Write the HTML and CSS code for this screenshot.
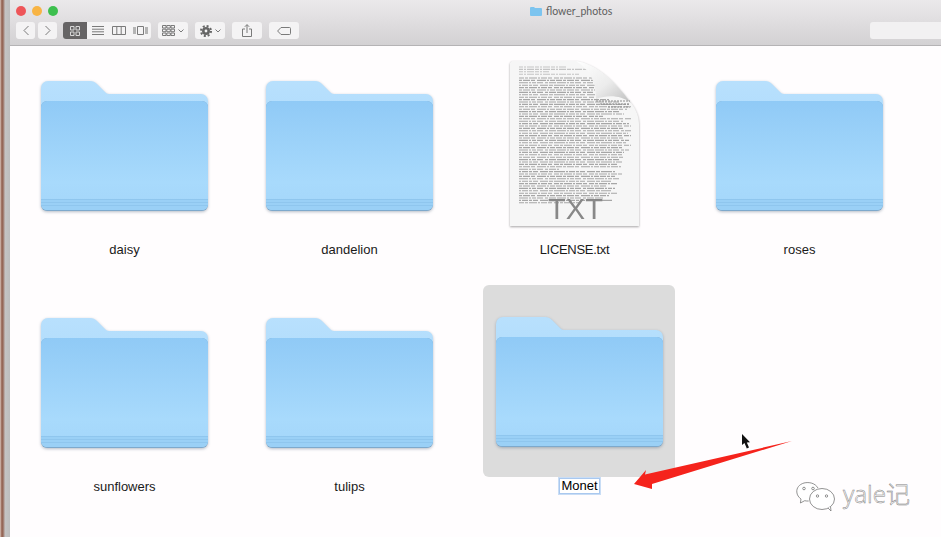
FILE: index.html
```html
<!DOCTYPE html>
<html lang="en">
<head>
  <meta charset="UTF-8" />
  <meta name="viewport" content="width=device-width, initial-scale=1.0"/>
  <title>flower_photos</title>
  <link rel="stylesheet" href="styles.css">
</head>
<body>
  <!-- shared folder picture -->
  <svg class="defs" width="0" height="0">
    <defs>
      <linearGradient id="folder-front" x1="0" y1="0" x2="0" y2="1">
        <stop offset="0" stop-color="#90caf6"/>
        <stop offset="0.75" stop-color="#a8dafc"/>
        <stop offset="1" stop-color="#a4d6fa"/>
      </linearGradient>
      <linearGradient id="folder-back" x1="0" y1="0" x2="0" y2="1">
        <stop offset="0" stop-color="#b8e0fd"/>
        <stop offset="1" stop-color="#aad9fb"/>
      </linearGradient>
      <linearGradient id="flap" x1="0" y1="0" x2="1" y2="1">
        <stop offset="0" stop-color="#ffffff"/>
        <stop offset="0.55" stop-color="#ececec"/>
        <stop offset="1" stop-color="#bdbdbd"/>
      </linearGradient>
      <symbol id="folder" viewBox="0 0 167 132">
        <path d="M0 8a7 7 0 0 1 7-7h42c3 0 5 1 7 3l8 8c2 2 3 2 6 2h90a7 7 0 0 1 7 7v60H0z" fill="url(#folder-back)"/>
        <rect x="0" y="21" width="167" height="110" rx="6" fill="#7ea9cc"/>
        <rect x="0" y="21" width="167" height="109" rx="6" fill="url(#folder-front)"/>
        <path d="M0 119h167v5a6 6 0 0 1-6 6H6a6 6 0 0 1-6-6z" fill="#9ad0f6"/>
        <path d="M0 119.500h167M0 122.500h167M0 125.500h167" stroke="#8fc6ee" stroke-width="1"/>
      </symbol>
    </defs>
  </svg>

  <div class="screen">
    <div class="edge"></div>
    <div class="window">
      <header class="chrome">
        <div class="titlebar">
          <span class="light red"></span>
          <span class="light yellow"></span>
          <span class="light green"></span>
          <div class="title">
            <svg class="title-icon" width="12" height="9" viewBox="0 0 12 9"><path d="M0 1a1 1 0 0 1 1-1h3l1 1h6a1 1 0 0 1 1 1v6a1 1 0 0 1-1 1H1a1 1 0 0 1-1-1z" fill="#7cc4ef"/></svg>
            <span>flower_photos</span>
          </div>
        </div>
        <div class="toolbar">
          <div class="group">
            <button class="btn nav"><svg width="8" height="11" viewBox="0 0 8 11"><path d="M6.500 1L2 5.500 6.500 10"/></svg></button>
            <button class="btn nav"><svg width="8" height="11" viewBox="0 0 8 11"><path d="M1.500 1L6 5.500 1.500 10"/></svg></button>
          </div>
          <div class="views">
            <button class="view active"><svg width="10" height="10" viewBox="0 0 10 10"><path d="M.5.500h3.500v3.500h-3.500zM6 .500h3.500v3.500H6zM.5 6h3.500v3.500h-3.500zM6 6h3.500v3.500H6z"/></svg></button>
            <button class="view"><svg width="12" height="9" viewBox="0 0 12 9"><path d="M0 .500h12M0 3.200h12M0 5.800h12M0 8.500h12"/></svg></button>
            <button class="view"><svg width="14" height="9" viewBox="0 0 14 9"><path d="M.5.500h13v8H.5zM4.800.500v8M9.200.500v8"/></svg></button>
            <button class="view cover"><svg width="15" height="9" viewBox="0 0 15 9"><path class="solid" d="M0 1h3v7H0zM12 1h3v7h-3z"/><path d="M4.500.500h6v8h-6z"/></svg></button>
          </div>
          <button class="btn wide"><svg width="13" height="11" viewBox="0 0 13 11"><path d="M.5.500h3.500v2.500H.5zM4.800.500h3.500v2.500H4.800zM9 .500h3.500v2.500H9zM.5 4.200h3.500v2.500H.5zM4.800 4.200h3.500v2.500H4.800zM9 4.200h3.500v2.500H9zM.5 8h3.500v2.500H.5zM4.800 8h3.500v2.500H4.800zM9 8h3.500v2.500H9z"/></svg><svg class="chev" width="6" height="4" viewBox="0 0 6 4"><path d="M.5.500L3 3 5.500.500"/></svg></button>
          <button class="btn wide"><svg width="12" height="12" viewBox="0 0 12 12"><circle class="gear-teeth" cx="6" cy="6" r="5"/><circle class="gear-body" cx="6" cy="6" r="2.700"/></svg><svg class="chev" width="6" height="4" viewBox="0 0 6 4"><path d="M.5.500L3 3 5.500.500"/></svg></button>
          <button class="btn wide"><svg width="10" height="13" viewBox="0 0 10 13"><path d="M3 5H.5v7.500h9V5H7M5 9V.8M2.800 2.800L5 .6l2.200 2.200"/></svg></button>
          <button class="btn wide"><svg width="14" height="8" viewBox="0 0 14 8"><path d="M4 .5h8.500a1 1 0 0 1 1 1v5a1 1 0 0 1-1 1H4L.6 4z"/></svg></button>
          <div class="search"></div>
        </div>
      </header>

      <main class="files">
        <div class="item">
          <div class="icon-box"><svg class="folder"><use href="#folder"/></svg></div>
          <span class="name">daisy</span>
        </div>
        <div class="item">
          <div class="icon-box"><svg class="folder"><use href="#folder"/></svg></div>
          <span class="name">dandelion</span>
        </div>
        <div class="item">
          <div class="icon-box">
            <svg class="doc" width="129" height="167" viewBox="0 0 129 167">
              <path class="paper" d="M2 0H66C84 3 100 15 118 38C125 46 129 54 129 63V165H0V2z"/>
              <path class="lines faint" d="M9 6h48M9 8.400h72M9 10.800h30M9 13.200h60"/>
              <path class="lines line-a" d="M9 17h74M9 26.600h75M9 36.200h76M9 45.800h112M9 55.400h84M9 65h112M9 74.600h112M9 84.200h112M9 93.800h103M9 103.400h98M9 113h104M9 122.600h99M9 132.200h99M9 141.800h62"/>
              <path class="lines line-b" d="M9 19.400h76M9 29h76M9 38.600h90M9 48.200h108M9 57.800h112M9 67.400h106M9 77h104M9 86.600h103M9 96.200h106M9 105.800h102M9 115.400h96M9 125h88M9 134.600h90"/>
              <path class="lines line-c" d="M9 21.800h74M9 31.400h74M9 41h100M9 50.600h100M9 60.200h104M9 69.800h112M9 79.400h110M9 89h110M9 98.600h100M9 108.200h40M9 117.800h100M9 127.400h96M9 137h84"/>
              <path class="lines line-d" d="M9 24.200h77M9 33.800h77M9 43.400h110M9 53h105M9 62.600h110M9 72.200h109M9 81.800h108M9 91.400h105M9 101h104M9 110.600h96M9 120.200h92M9 129.800h92M9 139.400h94"/>
              <path class="flap" d="M66 0C84 3 102 16 121 42C110 34 98 34 86 38C86 26 84 12 66 0z"/>
              <path class="fold-shadow" d="M86 40h34M90 43h30M98 46h22"/>
              <text class="doc-type" x="65.500" y="158" text-anchor="middle">TXT</text>
            </svg>
          </div>
          <span class="name doc-name">LICENSE.txt</span>
        </div>
        <div class="item">
          <div class="icon-box"><svg class="folder"><use href="#folder"/></svg></div>
          <span class="name">roses</span>
        </div>
        <div class="item">
          <div class="icon-box"><svg class="folder"><use href="#folder"/></svg></div>
          <span class="name">sunflowers</span>
        </div>
        <div class="item">
          <div class="icon-box"><svg class="folder"><use href="#folder"/></svg></div>
          <span class="name">tulips</span>
        </div>
        <div class="item moved">
          <div class="icon-box selected"><svg class="folder"><use href="#folder"/></svg></div>
          <span class="name editing">Monet</span>
        </div>
      </main>
    </div>

    <!-- annotations on top of the video frame -->
    <svg class="arrow" width="170" height="60" viewBox="0 0 170 60">
      <path d="M4 44L16 30 15 34.500 162 1 22 44 22 49z"/>
    </svg>
    <svg class="cursor" width="11" height="16" viewBox="0 0 11 16">
      <path d="M1 0L1 11 3.500 9 5.800 14.500 8 13.500 5.800 8.500 9 8.300z"/>
    </svg>
    <div class="watermark">
      <svg width="40" height="32" viewBox="0 0 40 32">
        <path d="M22 7C19 2 13 0.800 8 2 3 3.500 .5 7 .8 11c.2 3 2 5.500 4.200 7l-.6 4 4.300-2.300c1.500.3 2.500.4 4 .3"/>
        <ellipse cx="26" cy="18" rx="12.500" ry="10.500"/>
        <path d="M32 27l3 3-.5-4.500"/>
        <circle class="eye" cx="8" cy="7.500" r="1.300"/>
        <circle class="eye" cx="17" cy="7.500" r="1.300"/>
        <circle class="eye" cx="21.500" cy="15" r="1.200"/>
        <circle class="eye" cx="30.500" cy="15" r="1.200"/>
      </svg>
      <span class="watermark-text">yale记</span>
    </div>
  </div>
</body>
</html>
```

FILE: styles.css
```css
html, body {
  margin: 0;
  padding: 0;
  height: 537px;
  overflow: hidden;
}
body {
  font-family: 'Liberation Sans', 'Noto Sans CJK SC', sans-serif;
  background-color: #fffdfe;
}
.defs {
  display: block;
}
.screen {
  display: flex;
  height: 537px;
  position: relative;
  overflow: hidden;
}
.edge {
  flex: 0 0 10px;
  background: linear-gradient(to right, #d9c4bb 0, #8d5a48 2px, #a98d84 4px, #c4c4c4 5px, #bcbcbc 10px);
}
.window {
  flex: 1;
  display: flex;
  flex-direction: column;
  min-width: 0;
}

/* title bar and toolbar */
.chrome {
  box-sizing: border-box;
  height: 46px;
  padding: 1px 0 0 6px;
  border-bottom: 1px solid #b5b3b5;
  background: linear-gradient(#ebe9eb, #d3d1d3);
}
.titlebar {
  display: flex;
  align-items: center;
  gap: 6px;
  height: 20px;
}
.light {
  width: 10px;
  height: 10px;
  border-radius: 50%;
}
.red { background-color: #ee5559; }
.yellow { background-color: #f8b444; }
.green { background-color: #3dbf4e; }
.title {
  display: flex;
  align-items: center;
  gap: 4px;
  margin-left: 466px;
  font-family: 'Lato', 'Liberation Sans', sans-serif;
  font-size: 10.500px;
  color: #5e5e5e;
}
.toolbar {
  display: flex;
  align-items: center;
  gap: 7px;
  height: 17px;
  margin-top: 1px;
}
.toolbar button {
  border: 0;
  padding: 0;
  display: flex;
  align-items: center;
  justify-content: center;
}
.toolbar svg path {
  fill: none;
  stroke: #7a7a7a;
  stroke-width: 1;
}
.toolbar svg path.solid {
  fill: #b4b4b4;
  stroke: none;
}
.group {
  display: flex;
  gap: 3px;
}
.btn {
  height: 17px;
  border-radius: 3px;
  background-color: #f4f3f4;
}
.nav {
  width: 19px;
}
.wide {
  width: 30px;
  gap: 3px;
}
.views {
  display: flex;
  height: 17px;
  margin-left: -1px;
  border-radius: 3px;
  overflow: hidden;
  background-color: #f4f3f4;
}
.view {
  width: 21px;
  height: 17px;
  background-color: transparent;
}
.view.cover {
  width: 22px;
}
.view.active {
  width: 24px;
  background-color: #666465;
}
.toolbar .view.active path {
  stroke: #d8d8d8;
}
.gear-teeth {
  fill: none;
  stroke: #666;
  stroke-width: 2;
  stroke-dasharray: 2 1.930;
}
.gear-body {
  fill: #f4f3f4;
  stroke: #666;
  stroke-width: 2.600;
}
.search {
  width: 71px;
  height: 17px;
  margin-left: auto;
  border-radius: 3px 0 0 3px;
  background-color: #f2f1f2;
}

/* icon grid */
.files {
  flex: 1;
  display: grid;
  grid-template-columns: repeat(4, 225px);
  grid-auto-rows: 206px;
  row-gap: 31px;
  align-content: start;
  padding: 6px 0 0 2px;
}
.item {
  display: flex;
  flex-direction: column;
  align-items: center;
}
.item.moved {
  margin-left: 8px;
}
.icon-box {
  width: 192px;
  height: 188px;
  flex: none;
  display: flex;
  align-items: center;
  justify-content: center;
}
.icon-box.selected {
  height: 192px;
  margin-top: -4px;
  padding: 2px 0 0 2px;
  box-sizing: border-box;
  border-radius: 6px;
  background-color: #dcdcdc;
}
.folder {
  width: 167px;
  height: 132px;
  filter: drop-shadow(0 1px 1.500px rgba(90, 110, 130, 0.45));
}
.doc {
  display: block;
  margin-top: -4px;
  filter: drop-shadow(0 1px 1px rgba(0, 0, 0, 0.35));
}
.paper {
  fill: #f6f6f6;
}
.lines {
  fill: none;
  stroke: #a6a6a6;
  stroke-width: 1.100;
}
.line-a { stroke-dasharray: 5 1 3 1 8 1 2 1 6 1 4 2; }
.line-b { stroke-dasharray: 3 1 7 1 4 2 9 1 2 1 5 1 6 1; }
.line-c { stroke-dasharray: 9 1 2 1 4 1 6 2 3 1 7 1; }
.line-d { stroke-dasharray: 2 1 6 1 3 1 5 2 8 1 4 1 11 1; }
.lines.faint {
  stroke: #c4c4c4;
  stroke-dasharray: 4 1 2 1 7 1;
}
.flap {
  fill: url(#flap);
}
.fold-shadow {
  fill: none;
  stroke: #8c8c8c;
  stroke-width: 1;
  stroke-dasharray: 2 1;
}
.doc-type {
  font-family: 'Liberation Sans', sans-serif;
  font-size: 29px;
  fill: #888;
}
.name {
  margin-top: 1px;
  font-size: 13px;
  line-height: 18px;
  color: #1a1a1a;
}
.name.doc-name {
  letter-spacing: -0.300px;
}
.name.editing {
  line-height: 14px;
  padding: 0 1px;
  margin-left: 2px;
  color: #000;
  background-color: #fff;
  border: 1px solid #a9c8ef;
  box-shadow: 0 0 0 1px #c9ddf5;
}

/* things drawn over the frame */
.arrow {
  position: absolute;
  left: 630px;
  top: 440px;
}
.arrow path {
  fill: #f5231c;
}
.cursor {
  position: absolute;
  left: 741px;
  top: 434px;
}
.cursor path {
  fill: #111;
}
.watermark {
  position: absolute;
  left: 796px;
  top: 479px;
  display: flex;
  align-items: center;
  gap: 7px;
}
.watermark path, .watermark ellipse {
  fill: #fff;
  stroke: #777;
  stroke-width: 0.800;
}
.watermark .eye {
  fill: #fff;
  stroke: #666;
  stroke-width: 0.700;
}
.watermark-text {
  margin-bottom: 6px;
  font-family: 'Noto Sans', 'Noto Sans CJK SC', sans-serif;
  font-size: 24px;
  line-height: 30px;
  font-weight: 300;
  color: #fff;
  -webkit-text-stroke: 0.500px #808080;
}
```
